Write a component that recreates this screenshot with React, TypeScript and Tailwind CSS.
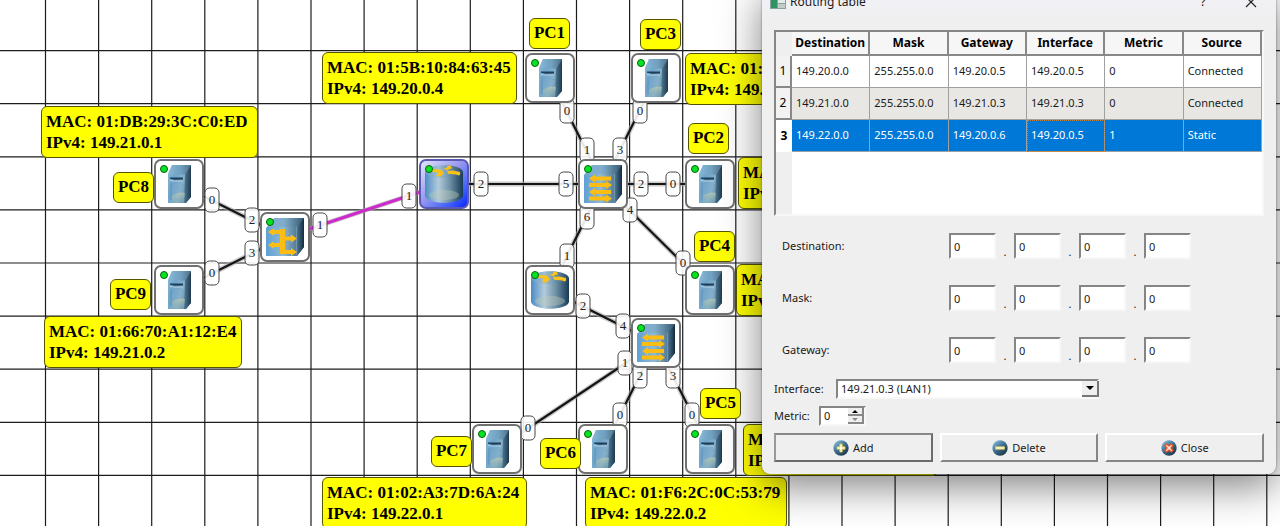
import React from "react";

type Kind = "pc" | "switch" | "hub" | "router";
type Device = { x: number; y: number; kind: Kind; selected?: boolean };

const devices: Device[] = [
  { x: 525, y: 53, kind: "pc" },
  { x: 631, y: 53, kind: "pc" },
  { x: 685, y: 159, kind: "pc" },
  { x: 154, y: 159, kind: "pc" },
  { x: 154, y: 265, kind: "pc" },
  { x: 685, y: 265, kind: "pc" },
  { x: 472, y: 424, kind: "pc" },
  { x: 578, y: 424, kind: "pc" },
  { x: 685, y: 424, kind: "pc" },
  { x: 578, y: 159, kind: "switch" },
  { x: 631, y: 318, kind: "switch" },
  { x: 260, y: 212, kind: "hub" },
  { x: 419, y: 159, kind: "router", selected: true },
  { x: 525, y: 265, kind: "router" },
];

const links = [
  [179, 184, 285, 237],
  [179, 290, 285, 237],
  [444, 184, 603, 184],
  [550, 78, 603, 184],
  [656, 78, 603, 184],
  [603, 184, 710, 184],
  [603, 184, 710, 290],
  [603, 184, 550, 290],
  [550, 290, 656, 343],
  [656, 343, 497, 449],
  [656, 343, 603, 449],
  [656, 343, 710, 449],
];

const ports: [string, number, number][] = [
  ["0", 212, 200], ["2", 252, 220], ["3", 252, 253], ["0", 212, 273],
  ["1", 320, 225], ["1", 409, 196], ["2", 481, 184], ["5", 566, 184],
  ["0", 567, 111], ["1", 587, 150], ["0", 640, 111], ["3", 620, 150],
  ["2", 641, 184], ["0", 673, 184], ["4", 630, 210], ["6", 587, 217],
  ["1", 567, 256], ["0", 683, 263], ["2", 583, 306], ["4", 623, 326],
  ["1", 625, 363], ["0", 528, 428], ["2", 640, 376], ["3", 673, 376],
  ["0", 620, 415], ["0", 692, 415],
];

const names: [string, number, number][] = [
  ["PC1", 529, 18], ["PC3", 640, 19], ["PC2", 688, 123], ["PC4", 694, 231],
  ["PC5", 700, 388], ["PC6", 540, 438], ["PC7", 431, 436], ["PC8", 113, 172],
  ["PC9", 110, 279],
];

const notes: { x: number; y: number; w: number; mac: string; ip: string }[] = [
  { x: 41, y: 106, w: 217, mac: "MAC: 01:DB:29:3C:C0:ED", ip: "IPv4: 149.21.0.1" },
  { x: 44, y: 316, w: 198, mac: "MAC: 01:66:70:A1:12:E4", ip: "IPv4: 149.21.0.2" },
  { x: 322, y: 52, w: 195, mac: "MAC: 01:5B:10:84:63:45", ip: "IPv4: 149.20.0.4" },
  { x: 685, y: 53, w: 195, mac: "MAC: 01:", ip: "IPv4: 149." },
  { x: 738, y: 157, w: 195, mac: "MAC", ip: "IPv4" },
  { x: 736, y: 264, w: 195, mac: "MAC", ip: "IPv4" },
  { x: 743, y: 424, w: 195, mac: "MAC", ip: "IPv4" },
  { x: 322, y: 477, w: 205, mac: "MAC: 01:02:A3:7D:6A:24", ip: "IPv4: 149.22.0.1" },
  { x: 585, y: 477, w: 202, mac: "MAC: 01:F6:2C:0C:53:79", ip: "IPv4: 149.22.0.2" },
];

const columns = ["Destination", "Mask", "Gateway", "Interface", "Metric", "Source"];
const routes = [
  ["149.20.0.0", "255.255.0.0", "149.20.0.5", "149.20.0.5", "0", "Connected"],
  ["149.21.0.0", "255.255.0.0", "149.21.0.3", "149.21.0.3", "0", "Connected"],
  ["149.22.0.0", "255.255.0.0", "149.20.0.6", "149.20.0.5", "1", "Static"],
];

const sunken = "border-2 border-t-[#858585] border-l-[#858585] border-r-[#f8f8f8] border-b-[#f8f8f8] bg-white";

function Arrow({ x1, x2, y, left }: { x1: number; x2: number; y: number; left?: boolean }) {
  const d = left
    ? `M${x1} ${y}l6-4v2H${x2}v4H${x1 + 6}v2z`
    : `M${x2} ${y}l-6-4v2H${x1}v4H${x2 - 6}v2z`;
  return <path d={d} fill="#fdbd12" />;
}

function DeviceIcon({ kind }: { kind: Kind }) {
  return (
    <svg viewBox="0 0 38 38" className="size-[38px]" aria-hidden="true">
      {kind === "pc" && (
        <g>
          <path d="M12 0H31V32L26 38H8V9z" fill="url(#tower)" />
          <path d="M12 0H31L25 9.500H8V9z" fill="url(#top)" opacity=".7" />
          <path d="M25 9.500L31 0V32L26 38H24z" fill="url(#side)" opacity=".85" />
          <path d="M10 12.500h13v2l-8 .3-5-1z" fill="#1f3f58" />
          <path d="M10 15.500l4 .6h9" fill="none" stroke="#c3dae6" strokeWidth=".7" />
          <path d="M11 18v17" stroke="#5789a7" strokeWidth=".7" />
          <path d="M12 31q7-5 13-3l-1 10H12z" fill="url(#glow)" />
          <circle cx="23" cy="20.500" r=".7" fill="#4fa4a0" />
        </g>
      )}
      {(kind === "switch" || kind === "hub") && (
        <g>
          <path d="M8 0H38V29L31 38H0V10z" fill="url(#box)" />
          <path d="M8 0H38L31 9H1z" fill="url(#top)" opacity=".55" />
          <path d="M31 9L38 0V29L31 38z" fill="url(#side)" />
          <path d="M30.500 9V37" stroke="#85a7bb" strokeWidth=".6" />
          {kind === "switch" ? (
            <g>
              <Arrow x1={5} x2={27} y={13.5} left />
              <Arrow x1={5} x2={28} y={20} />
              <Arrow x1={5} x2={27} y={27} left />
              <Arrow x1={5} x2={28} y={33.5} />
            </g>
          ) : (
            <g>
              <path d="M14 11h5v25h-5z" fill="#fdbd12" />
              <Arrow x1={2} x2={17} y={14} left />
              <Arrow x1={16} x2={31} y={20.5} />
              <Arrow x1={2} x2={17} y={27} left />
              <Arrow x1={16} x2={31} y={34} />
            </g>
          )}
        </g>
      )}
      {kind === "router" && (
        <g>
          <path d="M0 7C2-2 36-2 38 7V31C36 40 2 40 0 31z" fill="url(#cylinder)" />
          <path d="M0 7C2-2 36-2 38 7C36 15 2 15 0 7z" fill="url(#top)" opacity=".35" />
          <ellipse cx="19" cy="30" rx="15" ry="5" fill="#bccbb9" opacity=".4" />
          <g fill="#fdc21a">
            <path d="M7 4l8 .4 3 1.600-2 2-9-1.200z" />
            <path d="M11 11l2-3.500 5-.5 1 2-3 1.200-.5 1.600z" />
            <path d="M18 3.500l3.500-.5 1-2 3-.5 1.500 3-3 .5-1 1.500z" />
            <path d="M22 6l6-.5 7 1.500v2.500l-1 1-3-1-8-.8z" />
          </g>
        </g>
      )}
    </svg>
  );
}

function DeviceNode({ x, y, kind, selected }: Device) {
  return (
    <div
      className={`absolute flex size-[50px] items-center justify-center rounded-[7px] border-2 ${
        selected
          ? "border-[#5a5ab4] bg-linear-to-br from-[#e4e4fb] via-[#9898ee] via-45% to-[#0c0cff]"
          : "border-[#707070] bg-white"
      }`}
      style={{ left: x, top: y }}
    >
      <DeviceIcon kind={kind} />
      <span className="absolute top-1 left-1 size-2 rounded-full border border-[#086008] bg-[#05e423]" />
    </div>
  );
}

function Canvas() {
  const v = Array.from({ length: 60 }, (_, i) => -7.6 + i * 53.1);
  const h = Array.from({ length: 40 }, (_, i) => 50.6 + i * 53.1);
  return (
    <div className="absolute inset-0 overflow-hidden bg-white font-['Liberation_Serif',serif]">
      <svg className="absolute inset-0 size-full" aria-hidden="true">
        <defs>
          <linearGradient id="tower" x1="0" y1="0" x2="1" y2=".5">
            <stop offset="0" stopColor="#8fbbd9" />
            <stop offset=".35" stopColor="#6fa5cb" />
            <stop offset=".7" stopColor="#86afca" />
            <stop offset="1" stopColor="#5b89a8" />
          </linearGradient>
          <linearGradient id="box" x1="0" y1="0" x2="1" y2="0">
            <stop offset="0" stopColor="#5fa0d3" />
            <stop offset=".45" stopColor="#8fb9d5" />
            <stop offset="1" stopColor="#35586f" />
          </linearGradient>
          <linearGradient id="top" x1="0" y1="0" x2="1" y2="0">
            <stop offset="0" stopColor="#8dbbd8" />
            <stop offset=".55" stopColor="#6e9dbb" />
            <stop offset="1" stopColor="#34566f" />
          </linearGradient>
          <linearGradient id="side" x1="0" y1="0" x2="1" y2="0">
            <stop offset="0" stopColor="#4a7591" />
            <stop offset="1" stopColor="#142a3c" />
          </linearGradient>
          <linearGradient id="glow" x1="0" y1="0" x2="0" y2="1">
            <stop offset="0" stopColor="#c4d0ae" stopOpacity=".65" />
            <stop offset="1" stopColor="#8fb3a8" stopOpacity=".2" />
          </linearGradient>
          <linearGradient id="cylinder" x1="0" y1="0" x2="1" y2="0">
            <stop offset="0" stopColor="#4c8cc4" />
            <stop offset=".35" stopColor="#b2cbdb" />
            <stop offset=".65" stopColor="#6f91a6" />
            <stop offset="1" stopColor="#173a57" />
          </linearGradient>
        </defs>
        <g stroke="#1c1c1c" strokeWidth="1.200">
          {v.map((x) => <line key={x} x1={x} x2={x} y1="0" y2="100%" />)}
          {h.map((y) => <line key={y} x1="0" x2="100%" y1={y} y2={y} />)}
        </g>
        {links.map(([a, b, c, d], i) => (
          <g key={i}>
            <line x1={a} y1={b} x2={c} y2={d} stroke="#a8a8a8" strokeOpacity=".6" strokeWidth="5" />
            <line x1={a} y1={b} x2={c} y2={d} stroke="#141414" strokeWidth="2.200" />
          </g>
        ))}
        <line x1="285" y1="237" x2="444" y2="184" stroke="#a8a8a8" strokeOpacity=".6" strokeWidth="5" />
        <line x1="285" y1="237" x2="444" y2="184" stroke="#cc2acc" strokeWidth="3" />
      </svg>
      {ports.map(([n, x, y], i) => (
        <span
          key={i}
          className="absolute flex h-[25px] w-[15px] -translate-x-1/2 -translate-y-1/2 items-center justify-center rounded-[5px] border border-[#444] bg-white/90 pb-0.5 text-[13px] leading-4 text-[#222]"
          style={{ left: x, top: y }}
        >
          {n}
        </span>
      ))}
      {devices.map((d, i) => <DeviceNode key={i} {...d} />)}
      {names.map(([n, x, y]) => (
        <div
          key={n}
          className="absolute flex h-[31px] w-[41px] items-center justify-center rounded-md border border-[#555500] bg-[#ffff00] pb-px text-[17px] font-bold text-black"
          style={{ left: x, top: y }}
        >
          {n}
        </div>
      ))}
      {notes.map((n, i) => (
        <div
          key={i}
          className="absolute h-[52px] rounded-md border border-[#555500] bg-[#ffff00] px-1 py-[4px] text-[17px] leading-[21px] font-bold whitespace-nowrap text-black"
          style={{ left: n.x, top: n.y, width: n.w }}
        >
          <p>{n.mac}</p>
          <p>{n.ip}</p>
        </div>
      ))}
    </div>
  );
}

function RouteTable() {
  return (
    <div className={`h-[186px] ${sunken}`}>
      <div className="flex h-full flex-col bg-white">
        <table className="w-full table-fixed border-separate border-spacing-0 text-[11px]">
          <colgroup>
            <col className="w-[16px]" />
            {columns.map((c) => <col key={c} />)}
          </colgroup>
          <thead>
            <tr className="h-6 text-[12px]">
              <td className="bg-[#efefef]" />
              {columns.map((c) => (
                <th key={c} scope="col" className="border-r-2 border-b-2 border-[#888] bg-[#f6f6f6] p-0 text-center text-[12px] leading-4 font-bold text-black">
                  {c}
                </th>
              ))}
            </tr>
          </thead>
          <tbody>
            {routes.map((r, i) => (
              <tr key={i} className={`h-8 ${i === 2 ? "bg-[#0078d7] text-white" : i === 1 ? "bg-[#e9e7e3]" : "bg-white"}`}>
                <th
                  scope="row"
                  className={`p-0 text-center text-[12px] text-black ${
                    i === 2 ? "bg-white font-bold" : "border-r-2 border-b-2 border-[#888] bg-[#f2f2f2] font-normal"
                  }`}
                >
                  {i + 1}
                </th>
                {r.map((c, j) => (
                  <td
                    key={j}
                    className={`border-r border-b border-[#a0a0a0] p-0 pb-px pl-1 ${i === 2 && j === 3 ? "outline-1 -outline-offset-1 outline-dotted outline-[#c08040]" : ""}`}
                  >
                    {c}
                  </td>
                ))}
              </tr>
            ))}
          </tbody>
        </table>
        <div className="w-[16px] grow bg-[#efefef]" />
      </div>
    </div>
  );
}

function AddressRow({ label }: { label: string }) {
  return (
    <fieldset className="flex h-[25px] items-center">
      <legend className="float-left w-[167px]">{label}:</legend>
      <div className="flex items-center">
        {[0, 1, 2, 3].map((i) => (
          <React.Fragment key={i}>
            {i > 0 && <span className="w-[18px] pt-3 text-center">.</span>}
            <input
              aria-label={`${label} octet ${i + 1}`}
              defaultValue="0"
              className={`h-[26px] w-[47px] px-[3px] text-[11px] outline-none ${sunken}`}
            />
          </React.Fragment>
        ))}
      </div>
    </fieldset>
  );
}

function BallIcon({ sign }: { sign: "add" | "remove" | "close" }) {
  return (
    <svg viewBox="0 0 16 16" className="size-4" aria-hidden="true">
      <defs>
        <linearGradient id={`ball-${sign}`} x1=".1" y1="0" x2=".9" y2="1">
          <stop offset="0" stopColor="#8ec4e8" />
          <stop offset=".45" stopColor="#41718f" />
          <stop offset="1" stopColor="#142b3d" />
        </linearGradient>
      </defs>
      <circle cx="8" cy="8" r="7.700" fill={`url(#ball-${sign})`} />
      {sign === "add" && <path d="M6.800 4h2.400v2.800H12v2.400H9.200V12H6.800V9.200H4V6.800h2.800z" fill="#fffce0" stroke="#d2c65a" strokeWidth=".9" />}
      {sign === "remove" && <path d="M3.500 6.800h9v2.400h-9z" fill="#fffce0" stroke="#d2c65a" strokeWidth=".9" />}
      {sign === "close" && <path d="M4 5.500L5.500 4 8 6l2.500-2L12 5.500 10 8l2 2.500-1.500 1.500L8 10l-2.500 2L4 10.500 6 8z" fill="#ffe3d8" stroke="#f0501e" strokeWidth="1.300" />}
    </svg>
  );
}

function Dialog() {
  return (
    <section
      aria-label="Routing table"
      className="absolute top-[-13px] left-[762px] w-[514px] overflow-visible rounded-lg bg-[#efefef] font-['Noto_Sans',sans-serif] text-[11px] leading-4 text-[#1a1a1a] shadow-[0_12px_40px_rgba(0,0,0,0.5),0_0_2px_rgba(0,0,0,0.5)]"
    >
      <header className="flex h-9 items-start justify-between rounded-t-lg bg-linear-to-b from-[#f1f2f8] to-[#efefef] px-2 pt-[7px] text-[12px]">
        <div className="flex items-center gap-1">
          <svg viewBox="0 0 16 14" className="h-[14px] w-4" aria-hidden="true">
            <path d="M0 0h16v14H0z" fill="#8aa39a" />
            <path d="M1 3h6v10H1z" fill="#2f9464" />
            <path d="M8 3h7v5H8z" fill="#e4ebe8" />
            <path d="M8 9h7v4H8z" fill="#c3cbc8" />
          </svg>
          <h1>Routing table</h1>
        </div>
        <div className="flex items-center gap-9 pr-[11px]">
          <button type="button" aria-label="Help" className="w-3">?</button>
          <button type="button" aria-label="Close window">
            <svg viewBox="0 0 12 12" className="size-3" aria-hidden="true">
              <path d="M1 1l10 10M11 1L1 11" stroke="#222" strokeWidth="1.200" />
            </svg>
          </button>
        </div>
      </header>
      <form className="px-3 pt-[7px] pb-3" onSubmit={(e) => e.preventDefault()}>
        <RouteTable />
        <div className="mt-4 flex flex-col gap-[27px] pl-2">
          <AddressRow label="Destination" />
          <AddressRow label="Mask" />
          <AddressRow label="Gateway" />
        </div>
        <div className="mt-[18px] flex items-center">
          <label htmlFor="iface" className="w-[62px]">Interface:</label>
          <div className="relative">
            <select id="iface" className={`block h-5 w-[263px] appearance-none pl-[3px] leading-4 outline-none ${sunken}`}>
              <option>149.21.0.3 (LAN1)</option>
            </select>
            <span className="pointer-events-none absolute inset-y-0.5 right-0 flex w-[17px] items-center justify-center border-r-2 border-b-2 border-[#777] bg-[#efefef]">
              <svg viewBox="0 0 8 4" className="h-1 w-2" aria-hidden="true"><path d="M0 0h8L4 4z" /></svg>
            </span>
          </div>
        </div>
        <div className="mt-[7px] flex items-center">
          <label htmlFor="metric" className="w-[45px]">Metric:</label>
          <div className={`flex h-5 w-[47px] ${sunken}`}>
            <input id="metric" defaultValue="0" className="w-4 grow pl-[3px] text-[11px] outline-none" />
            <div className="flex w-4 shrink-0 flex-col">
              {["Increase", "Decrease"].map((s, i) => (
                <button key={s} type="button" aria-label={s} className="flex h-2 items-center justify-center border-r-2 border-b-2 border-[#888] bg-[#efefef]">
                  <svg viewBox="0 0 6 3" className="h-[3px] w-1.5" aria-hidden="true">
                    <path d={i ? "M0 0h6L3 3z" : "M0 3h6L3 0z"} fill={i ? "#888" : "#000"} />
                  </svg>
                </button>
              ))}
            </div>
          </div>
        </div>
        <div className="mt-[7px] grid grid-cols-3 gap-[7px]">
          <button type="submit" className="flex h-[29px] items-center justify-center gap-1 border-2 border-t-[#888] border-r-[#6c6c6c] border-b-[#6c6c6c] border-l-[#999]">
            <BallIcon sign="add" />Add
          </button>
          <button type="button" className="flex h-[29px] items-center justify-center gap-1 border-2 border-t-white border-r-[#858585] border-b-[#858585] border-l-white">
            <BallIcon sign="remove" />Delete
          </button>
          <button type="button" className="flex h-[29px] items-center justify-center gap-1 border-2 border-t-white border-r-[#858585] border-b-[#858585] border-l-white">
            <BallIcon sign="close" />Close
          </button>
        </div>
      </form>
    </section>
  );
}

export default function App() {
  return (
    <main className="relative h-screen w-full overflow-hidden">
      <Canvas />
      <Dialog />
    </main>
  );
}
